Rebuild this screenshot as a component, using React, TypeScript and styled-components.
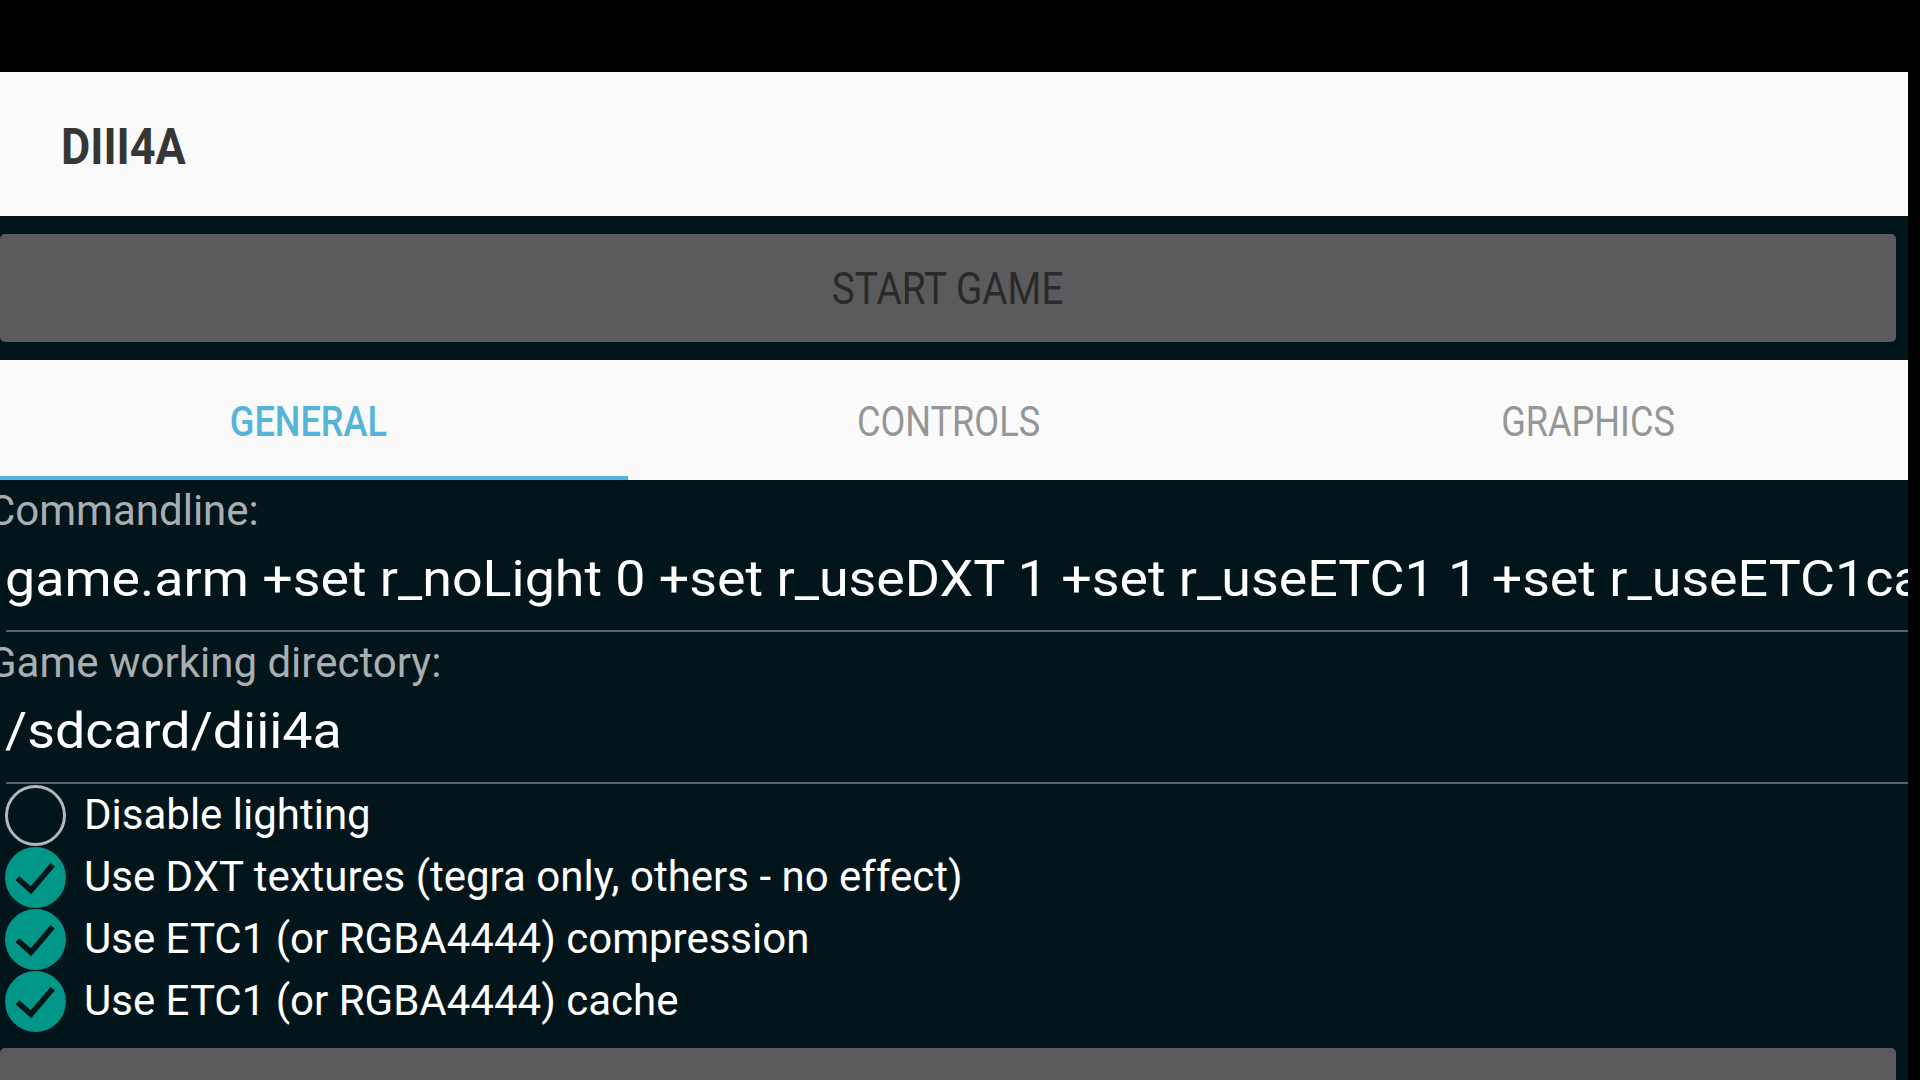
import React from "react";
import styled, { createGlobalStyle } from "styled-components";

const Global = createGlobalStyle`
  html, body {
    margin: 0;
    padding: 0;
    background: #000;
    overflow: hidden;
  }
  body {
    font-family: Roboto, "Noto Sans", "Liberation Sans", sans-serif;
  }
`;

const DARK = "#02151b";
const GRAY_BTN = "#5b5b5d";

const Screen = styled.div`
  width: 1908px;
  height: 1080px;
  display: flex;
  flex-direction: column;
  overflow: hidden;
  background: ${DARK};
`;

const StatusBar = styled.div`
  height: 72px;
  flex: none;
  background: #000;
`;

const AppBar = styled.header`
  height: 144px;
  flex: none;
  background: #fafafa;
  display: flex;
  align-items: center;
  padding-left: 61px;
`;

const Squeezed = styled.span<{ $sx: number; $origin?: string }>`
  display: inline-block;
  transform: scaleX(${(p) => p.$sx});
  transform-origin: ${(p) => p.$origin ?? "center"};
  white-space: nowrap;
`;

const Title = styled.h1`
  margin: 0;
  font-family: Roboto, sans-serif;
  font-weight: 700;
  font-size: 50px;
  line-height: 60px;
  color: #363636;
  margin-top: 5px;
`;

const ButtonArea = styled.div`
  flex: none;
  padding: 18px 12px 18px 0;
  background: ${DARK};
`;

const BigButton = styled.button`
  display: flex;
  align-items: center;
  justify-content: center;
  width: 100%;
  height: 108px;
  border: none;
  border-radius: 5px;
  background: ${GRAY_BTN};
  color: #2a2a2a;
  font-family: Roboto, sans-serif;
  font-size: 44px;
  font-weight: 400;
  padding: 0;
  padding-top: 2px;
`;

const TabBar = styled.nav`
  flex: none;
  height: 120px;
  width: 1920px;
  margin-left: -12px;
  display: flex;
  background: #fafafa;
`;

const Tab = styled.div<{ $active?: boolean }>`
  flex: 1;
  display: flex;
  align-items: center;
  justify-content: center;
  font-family: Roboto, sans-serif;
  font-size: 42px;
  font-weight: ${(p) => (p.$active ? 500 : 400)};
  color: ${(p) => (p.$active ? "#56b4d8" : "#969696")};
  box-shadow: ${(p) => (p.$active ? "inset 0 -4px 0 #56b4d8" : "none")};
  padding-top: 2px;
`;

const Content = styled.main`
  flex: 1;
  display: flex;
  flex-direction: column;
  background: ${DARK};
  font-family: Roboto, sans-serif;
`;

const Field = styled.section`
  display: flex;
  flex-direction: column;
  padding-top: 6px;
`;

const Label = styled.div`
  margin-left: -12px;
  font-size: 42px;
  line-height: 50px;
  color: #a9aeb1;
  white-space: nowrap;
`;

const ValueBox = styled.div`
  margin-top: 13px;
  height: 60px;
  overflow: hidden;
  padding-left: 5px;
`;

const ValueText = styled.div`
  font-size: 50px;
  line-height: 60px;
  color: #ffffff;
  white-space: nowrap;
  transform: scaleX(1.075);
  transform-origin: left center;
`;

const Divider = styled.hr`
  margin: 21px 0 0 6px;
  border: none;
  height: 2px;
  background: #56616a;
`;

const Checks = styled.ul`
  list-style: none;
  margin: 0;
  padding: 0;
  display: flex;
  flex-direction: column;
`;

const CheckRow = styled.li`
  height: 62px;
  display: flex;
  align-items: center;
  gap: 18px;
  padding-left: 5px;
`;

const Circle = styled.span<{ $checked?: boolean }>`
  flex: none;
  width: 61px;
  height: 61px;
  border-radius: 50%;
  box-sizing: border-box;
  display: flex;
  align-items: center;
  justify-content: center;
  background: ${(p) => (p.$checked ? "#009688" : "transparent")};
  border: ${(p) => (p.$checked ? "none" : "3px solid #b3b7b9")};
`;

const CheckLabel = styled.span`
  font-size: 42px;
  line-height: 62px;
  color: #ffffff;
  white-space: nowrap;
`;

const BottomArea = styled.div`
  padding: 16px 12px 0 0;
`;

const CheckMark = () => (
  <svg width="61" height="61" viewBox="0 0 24 24" aria-hidden="true">
    <polyline
      points="4.9,12.3 10.2,17 18.8,7"
      fill="none"
      stroke="#02151b"
      strokeWidth="2.2"
      strokeLinecap="butt"
      strokeLinejoin="miter"
    />
  </svg>
);

const options = [
  { label: "Disable lighting", checked: false },
  { label: "Use DXT textures (tegra only, others - no effect)", checked: true },
  { label: "Use ETC1 (or RGBA4444) compression", checked: true },
  { label: "Use ETC1 (or RGBA4444) cache", checked: true },
];

export default function App() {
  return (
    <>
      <Global />
      <Screen>
        <StatusBar />
        <AppBar>
          <Title>
            <Squeezed $sx={0.9} $origin="left center">DIII4A</Squeezed>
          </Title>
        </AppBar>
        <ButtonArea>
          <BigButton>
            <Squeezed $sx={0.88}>START GAME</Squeezed>
          </BigButton>
        </ButtonArea>
        <TabBar>
          <Tab $active>
            <Squeezed $sx={0.86}>GENERAL</Squeezed>
          </Tab>
          <Tab>
            <Squeezed $sx={0.86}>CONTROLS</Squeezed>
          </Tab>
          <Tab>
            <Squeezed $sx={0.86}>GRAPHICS</Squeezed>
          </Tab>
        </TabBar>
        <Content>
          <Field>
            <Label>Commandline:</Label>
            <ValueBox>
              <ValueText>
                game.arm +set r_noLight 0 +set r_useDXT 1 +set r_useETC1 1 +set r_useETC1cache 1
              </ValueText>
            </ValueBox>
            <Divider />
          </Field>
          <Field>
            <Label>Game working directory:</Label>
            <ValueBox>
              <ValueText>/sdcard/diii4a</ValueText>
            </ValueBox>
            <Divider />
          </Field>
          <Checks>
            {options.map((o) => (
              <CheckRow key={o.label}>
                <Circle $checked={o.checked}>{o.checked && <CheckMark />}</Circle>
                <CheckLabel>{o.label}</CheckLabel>
              </CheckRow>
            ))}
          </Checks>
          <BottomArea>
            <BigButton as="div" />
          </BottomArea>
        </Content>
      </Screen>
    </>
  );
}
